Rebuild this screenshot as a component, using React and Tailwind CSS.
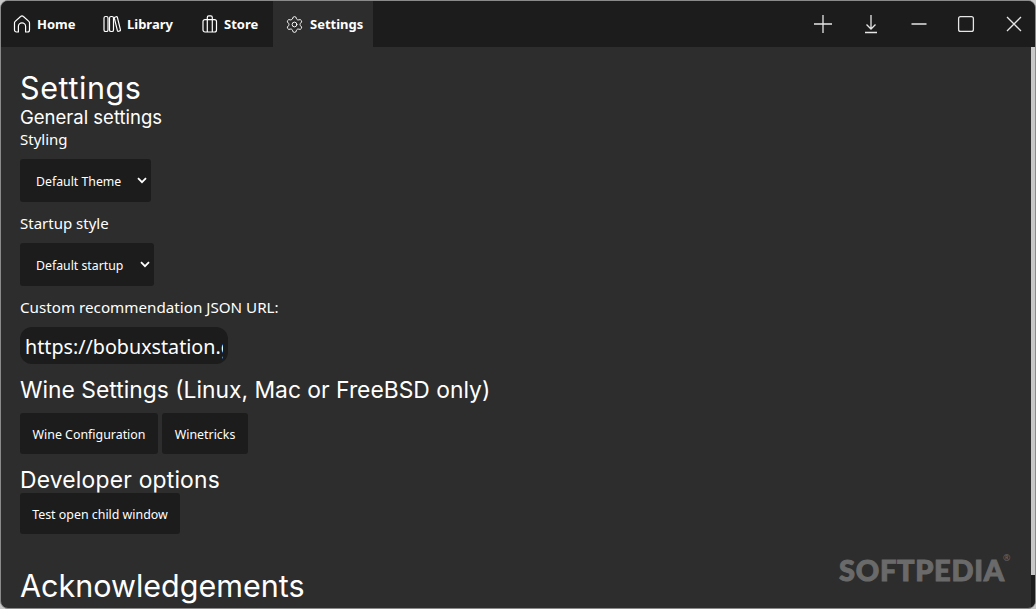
import { Settings } from 'lucide-react';

function HomeIcon() {
  return (
    <svg className="w-[18px] h-[18px]" viewBox="0 0 18 18" fill="none" stroke="currentColor" strokeWidth={1.2} strokeLinejoin="round">
      <path d="M2.2 6.4L7.6 1.5a2 2 0 0 1 2.8 0l5.4 4.9a2 2 0 0 1 .7 1.5V15a2 2 0 0 1-2 2h-1.9V11.5a3.6 3.6 0 0 0-7.2 0V17H3.5a2 2 0 0 1-2-2V7.9a2 2 0 0 1 .7-1.5z" />
    </svg>
  );
}

function LibraryIcon() {
  return (
    <svg className="w-[18px] h-[18px]" viewBox="0 0 18 18" fill="none" stroke="currentColor" strokeWidth={1.2}>
      <rect x="1" y="1.5" width="4" height="15" rx="1.6" />
      <rect x="6.5" y="1.5" width="4" height="15" rx="1.6" />
      <path d="M11.8 2.2l1.4-.5c.6-.2 1 0 1.2.6l3 12.4c.1.6 0 1-.6 1.2l-1.2.4c-.6.2-1 0-1.2-.6L11.4 3.4c-.1-.6 0-1 .4-1.2z" />
    </svg>
  );
}

function StoreIcon() {
  return (
    <svg className="w-[16px] h-[18px]" viewBox="0 0 16 18" fill="none" stroke="currentColor" strokeWidth={1.2}>
      <rect x="1" y="4.6" width="13.5" height="12.4" rx="2" />
      <path d="M5.3 17V2.4a1.5 1.5 0 0 1 1.5-1.5h2a1.5 1.5 0 0 1 1.5 1.5V17" />
    </svg>
  );
}

function Tab({ icon, label, active, className }) {
  return (
    <div className={`h-full flex items-center gap-[6px] font-bold text-[13px] text-white ${active ? 'bg-[#2d2d2d]' : ''} ${className}`}>
      {icon}
      <span className="pt-[1px]">{label}</span>
    </div>
  );
}

function Chevron() {
  return (
    <svg className="w-[10px] h-[7px]" viewBox="0 0 10 7" fill="none" stroke="white" strokeWidth={1.8}>
      <path d="M1 1.2l4 4 4-4" />
    </svg>
  );
}

function Select({ label, className }) {
  return (
    <div className={`h-[43px] bg-[#1c1c1c] rounded-[3px] flex items-center pl-4 text-[12.3px] text-white ${className}`}>
      <span className="pt-[3px]">{label}</span>
      <span className="ml-auto mr-[4px]"><Chevron /></span>
    </div>
  );
}

function Button({ children, className }) {
  return (
    <div className={`h-[41px] pt-[3px] bg-[#1c1c1c] rounded-[3px] flex items-center justify-center text-[12.4px] text-white ${className}`}>
      {children}
    </div>
  );
}

function WinIcon({ children, className }) {
  return (
    <svg className={`w-[22px] h-[22px] ${className || ''}`} viewBox="0 0 22 22" fill="none" stroke="#e6e6e6" strokeWidth={1.3}>
      {children}
    </svg>
  );
}

export default function App() {
  return (
    <div className="w-[1036px] h-[609px] bg-[#c8c8c8]">
      <div className="w-full h-full border border-[#8a8a8a] rounded-[8px] overflow-hidden flex flex-col bg-[#2d2d2d] font-['Noto_Sans',sans-serif]">
        <header className="h-[46px] shrink-0 bg-[#1c1c1c] flex items-center">
          <Tab className="pl-[12px] w-[87px]" icon={<HomeIcon />} label="Home" />
          <Tab className="pl-[15px] w-[100px]" icon={<LibraryIcon />} label="Library" />
          <Tab className="pl-[14px] w-[85px]" icon={<StoreIcon />} label="Store" />
          <Tab className="pl-[12px] w-[100px] gap-[5px]" active icon={<Settings size={19} strokeWidth={1.2} />} label="Settings" />
          <div className="ml-auto flex items-center gap-[26px] pr-[10px]">
            <WinIcon><path d="M11 2v18M2 11h18" /></WinIcon>
            <WinIcon><path d="M11 2v14M6.5 11.5L11 16l4.5-4.5M5 19.5h12" /></WinIcon>
            <WinIcon><path d="M3.5 11h15" /></WinIcon>
            <WinIcon className="ml-[-1px]"><rect x="3.6" y="3.6" width="14.8" height="14.8" rx="2" /></WinIcon>
            <WinIcon><path d="M4 4l14 14M18 4L4 18" /></WinIcon>
          </div>
        </header>
        <div className="flex-1 min-h-0 flex relative">
          <main className="flex-1 overflow-hidden pl-[19px] pt-[23px] text-white">
            <h1 className="text-[30.5px] leading-[36px] tracking-[0.6px] font-['Inter',sans-serif]">Settings</h1>
            <h2 className="text-[18.5px] leading-[22px] font-['Inter',sans-serif]">General settings</h2>
            <p className="text-[15px] leading-[20px] mt-[1px]">Styling</p>
            <Select className="w-[131px] mt-[10px]" label="Default Theme" />
            <p className="text-[15px] leading-[20px] mt-[11px]">Startup style</p>
            <Select className="w-[134px] mt-[10px]" label="Default startup" />
            <p className="text-[15.2px] leading-[20px] mt-[11px]">Custom recommendation JSON URL:</p>
            <div className="w-[208px] h-[37px] mt-[10px] bg-[#1c1c1c] rounded-[12px] px-[5px] overflow-hidden flex items-center">
              <span className="text-[19.7px] pt-[2px] whitespace-nowrap overflow-hidden font-['Noto_Sans',sans-serif]">https://bobuxstation.github.io</span>
            </div>
            <h2 className="text-[22.85px] leading-[28px] mt-[12px] font-['Inter',sans-serif]">Wine Settings (Linux, Mac or FreeBSD only)</h2>
            <div className="flex gap-1 mt-[9px]">
              <Button className="w-[138px]">Wine Configuration</Button>
              <Button className="w-[86px]">Winetricks</Button>
            </div>
            <h2 className="text-[22.85px] leading-[28px] tracking-[0.2px] mt-[12px] font-['Inter',sans-serif]">Developer options</h2>
            <div className="flex mt-[-1px]">
              <Button className="w-[160px]">Test open child window</Button>
            </div>
            <h1 className="text-[30.5px] leading-[36px] mt-[34px] font-['Inter',sans-serif]">Acknowledgements</h1>
          </main>
          <div className="w-[4px] shrink-0 bg-[#1c1c1c]">
            <div className="h-[528px] bg-[#c8c8c8]" />
          </div>
          <span className="absolute left-[838px] top-[505px] text-[29px] leading-[36px] font-black tracking-[0.7px] text-[#6a6a6a] [-webkit-text-stroke:1px_#6a6a6a] font-['Lato',sans-serif]">
            SOFTPEDIA
          </span>
          <span className="absolute left-[1002px] top-[505px] text-[9px] leading-[12px] text-[#6a6a6a]">®</span>
        </div>
      </div>
    </div>
  );
}
